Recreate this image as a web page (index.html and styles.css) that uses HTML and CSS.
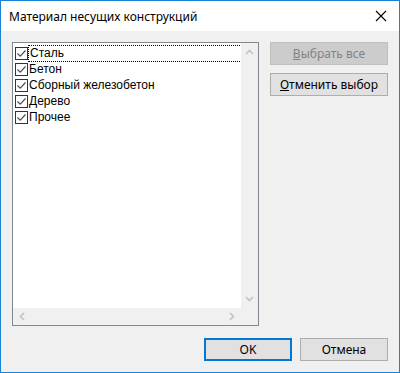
FILE: index.html
```html
<!DOCTYPE html>
<html lang="ru">
<head>
    <meta charset="UTF-8">
    <title>Материал несущих конструкций</title>
    <link rel="stylesheet" href="styles.css">
</head>
<body>
    <div class="window">
        <div class="titlebar">
            <span class="title">Материал несущих конструкций</span>
            <svg class="close" width="12" height="12" viewBox="0 0 12 12">
                <path d="M1 1 L11 11 M11 1 L1 11" stroke="#000" stroke-width="1.1" fill="none"/>
            </svg>
        </div>
        <div class="content">
            <div class="main">
                <div class="listbox">
                    <div class="items">
                        <div class="item focused">
                            <span class="check"><svg width="11" height="11" viewBox="0 0 11 11"><path d="M1.5 5.5 L4.2 8.2 L9.5 2.5" stroke="#4d4d4d" stroke-width="1.2" fill="none"/></svg></span>
                            <span class="label">Сталь</span>
                        </div>
                        <div class="item">
                            <span class="check"><svg width="11" height="11" viewBox="0 0 11 11"><path d="M1.5 5.5 L4.2 8.2 L9.5 2.5" stroke="#4d4d4d" stroke-width="1.2" fill="none"/></svg></span>
                            <span class="label">Бетон</span>
                        </div>
                        <div class="item">
                            <span class="check"><svg width="11" height="11" viewBox="0 0 11 11"><path d="M1.5 5.5 L4.2 8.2 L9.5 2.5" stroke="#4d4d4d" stroke-width="1.2" fill="none"/></svg></span>
                            <span class="label">Сборный железобетон</span>
                        </div>
                        <div class="item">
                            <span class="check"><svg width="11" height="11" viewBox="0 0 11 11"><path d="M1.5 5.5 L4.2 8.2 L9.5 2.5" stroke="#4d4d4d" stroke-width="1.2" fill="none"/></svg></span>
                            <span class="label">Дерево</span>
                        </div>
                        <div class="item">
                            <span class="check"><svg width="11" height="11" viewBox="0 0 11 11"><path d="M1.5 5.5 L4.2 8.2 L9.5 2.5" stroke="#4d4d4d" stroke-width="1.2" fill="none"/></svg></span>
                            <span class="label">Прочее</span>
                        </div>
                    </div>
                    <div class="vscroll">
                        <svg width="9" height="6" viewBox="0 0 9 6"><path d="M1 5 L4.5 1.5 L8 5" stroke="#c2c2c2" stroke-width="1.6" fill="none"/></svg>
                        <svg width="9" height="6" viewBox="0 0 9 6"><path d="M1 1 L4.5 4.5 L8 1" stroke="#c2c2c2" stroke-width="1.6" fill="none"/></svg>
                    </div>
                    <div class="hscroll">
                        <svg width="6" height="9" viewBox="0 0 6 9"><path d="M5 1 L1.5 4.5 L5 8" stroke="#c2c2c2" stroke-width="1.6" fill="none"/></svg>
                        <svg width="6" height="9" viewBox="0 0 6 9"><path d="M1 1 L4.5 4.5 L1 8" stroke="#c2c2c2" stroke-width="1.6" fill="none"/></svg>
                    </div>
                    <div class="corner"></div>
                </div>
                <div class="side">
                    <button class="btn disabled"><u>В</u>ыбрать все</button>
                    <button class="btn"><u>О</u>тменить выбор</button>
                </div>
            </div>
            <div class="footer">
                <button class="btn default">OK</button>
                <button class="btn">Отмена</button>
            </div>
        </div>
    </div>
</body>
</html>
```

FILE: styles.css
```css
* {
    margin: 0;
    padding: 0;
    box-sizing: border-box;
}

body {
    font-family: "Segoe UI", "Noto Sans", "Liberation Sans", sans-serif;
    font-size: 12px;
    color: #000;
    background: #fff;
}

.window {
    width: 400px;
    height: 373px;
    border: 1px solid #1883d7;
    background: #f0f0f0;
    display: flex;
    flex-direction: column;
}

.titlebar {
    height: 30px;
    background: #fff;
    display: flex;
    align-items: center;
    justify-content: space-between;
    padding: 0 12px 0 8px;
}

.title {
    font-size: 12px;
}

.content {
    flex: 1;
    display: flex;
    flex-direction: column;
    padding: 11px 11px 10px 11px;
}

.main {
    display: flex;
    gap: 11px;
}

.listbox {
    width: 247px;
    height: 284px;
    border: 1px solid #828790;
    background: #fff;
    display: grid;
    grid-template-columns: 1fr 17px;
    grid-template-rows: 1fr 17px;
}

.items {
    padding: 2px 0 0 2px;
    overflow: hidden;
}

.item {
    height: 16px;
    display: flex;
    align-items: center;
    white-space: nowrap;
}

.check {
    width: 13px;
    height: 13px;
    border: 1px solid #333;
    background: #fff;
    display: flex;
    align-items: center;
    justify-content: center;
    flex-shrink: 0;
}

.label {
    font-family: "Liberation Sans", "Noto Sans", sans-serif;
    padding: 0 1px;
    line-height: 14px;
}

.item.focused .label {
    flex: 1;
    outline: 1px dotted #000;
    margin-left: 1px;
    height: 15px;
}

.vscroll {
    background: #f0f0f0;
    display: flex;
    flex-direction: column;
    justify-content: space-between;
    align-items: center;
    padding: 6px 0 6px;
}

.hscroll {
    background: #f0f0f0;
    display: flex;
    justify-content: space-between;
    align-items: center;
    padding: 0 6px;
}

.corner {
    background: #f0f0f0;
}

.side {
    display: flex;
    flex-direction: column;
    gap: 8px;
}

.btn {
    font-family: inherit;
    font-size: 12px;
    height: 23px;
    width: 118px;
    background: #e1e1e1;
    border: 1px solid #adadad;
    color: #000;
}

.btn.disabled {
    background: #cccccc;
    border-color: #bfbfbf;
    color: #838383;
}

.footer {
    margin-top: 12px;
    display: flex;
    justify-content: flex-end;
    gap: 8px;
}

.footer .btn {
    width: 88px;
}

.btn.default {
    border: 2px solid #0078d7;
}
```
